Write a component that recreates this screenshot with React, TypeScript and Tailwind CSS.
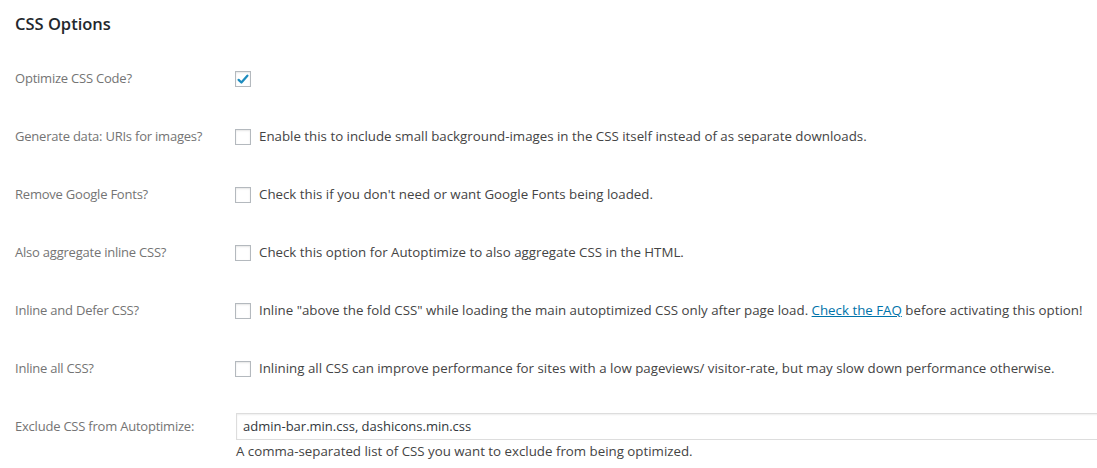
import React from 'react';

type Row = {
  label: string;
  checked?: boolean;
  desc?: React.ReactNode;
};

const rows: Row[] = [
  { label: 'Optimize CSS Code?', checked: true },
  {
    label: 'Generate data: URIs for images?',
    desc: 'Enable this to include small background-images in the CSS itself instead of as separate downloads.',
  },
  { label: 'Remove Google Fonts?', desc: "Check this if you don't need or want Google Fonts being loaded." },
  { label: 'Also aggregate inline CSS?', desc: 'Check this option for Autoptimize to also aggregate CSS in the HTML.' },
  {
    label: 'Inline and Defer CSS?',
    desc: (
      <>
        Inline "above the fold CSS" while loading the main autoptimized CSS only after page load.{' '}
        <a href="#" className="text-[#0073aa] underline">
          Check the FAQ
        </a>{' '}
        before activating this option!
      </>
    ),
  },
  {
    label: 'Inline all CSS?',
    desc: 'Inlining all CSS can improve performance for sites with a low pageviews/ visitor-rate, but may slow down performance otherwise.',
  },
];

const Checkbox = ({ checked }: { checked?: boolean }) => (
  <span className="w-4 h-4 shrink-0 border border-[#b4b9be] bg-white shadow-[inset_0_1px_2px_rgba(0,0,0,0.1)] flex items-center justify-center">
    {checked && (
      <svg viewBox="0 0 16 16" className="w-[15px] h-[15px]">
        <path d="M3 8.4 L6.2 11.4 L13 3.6" fill="none" stroke="#1e8cbe" strokeWidth="2.6" strokeLinecap="round" strokeLinejoin="round" />
      </svg>
    )}
  </span>
);

export default function App() {
  return (
    <div className="w-[1097px] h-[468px] overflow-hidden bg-white font-['Open_Sans',sans-serif] text-[13.3px] text-[#444]">
      <h2 className="pl-[15px] pt-[12px] text-[16.5px] font-semibold text-[#23282d] leading-[24px]">CSS Options</h2>
      <div className="mt-[34px] flex flex-col gap-[40px]">
        {rows.map((r) => (
          <div key={r.label} className="flex items-center h-[18px]">
            <div className="w-[235px] shrink-0 pl-[15px] text-[13px] tracking-[-0.22px] text-[#747474]">{r.label}</div>
            <Checkbox checked={r.checked} />
            {r.desc && <span className="ml-[8px] whitespace-nowrap">{r.desc}</span>}
          </div>
        ))}
        <div className="flex -mt-[5px]">
          <div className="w-[236px] shrink-0 pl-[15px] pt-[4px] text-[13px] tracking-[-0.22px] text-[#747474]">
            Exclude CSS from Autoptimize:
          </div>
          <div className="flex-1 min-w-0">
            <div className="h-[27px] border border-[#ddd] shadow-[inset_0_1px_2px_rgba(0,0,0,0.07)] px-[6px] flex items-center text-[13px] text-[#32373c] w-[900px]">
              admin-bar.min.css, dashicons.min.css
            </div>
            <p className="mt-[2px] text-[#444]">A comma-separated list of CSS you want to exclude from being optimized.</p>
          </div>
        </div>
      </div>
    </div>
  );
}
